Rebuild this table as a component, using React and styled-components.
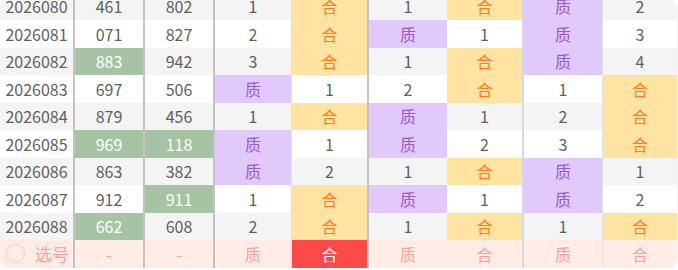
import React from "react";
import styled, { createGlobalStyle, css } from "styled-components";

const GlobalStyle = createGlobalStyle`
  html, body {
    margin: 0;
    padding: 0;
    background: #ffffff;
  }
  body {
    font-family: "Noto Sans CJK SC", "Noto Sans", sans-serif;
  }
`;

const Card = styled.div`
  width: 677px;
  height: 268px;
  border-radius: 10px;
  overflow: hidden;
  background: #ffffff;
  box-shadow: 0 0 3px rgba(0, 0, 0, 0.14);
`;

// the list is scrolled a little, the first row is cut at the top
const List = styled.div`
  margin-top: -7.5px;
`;

const Row = styled.div`
  display: grid;
  grid-template-columns: 75px 70px 70px 77px 77px 78px 77px 79px 1fr;
  height: 27.5px;
  background: ${p => (p.$tail ? "#ffece6" : p.$odd ? "#ffffff" : "#f4f4f4")};
`;

const tones = {
  plain: css`
    color: #5f5f5f;
  `,
  green: css`
    background: #a6c4a4;
    color: #ffffff;
  `,
  he: css`
    background: #ffe3a3;
    color: #ff7a1a;
  `,
  zhi: css`
    background: #e1c9fb;
    color: #9a57cf;
  `,
  pick: css`
    color: #ff9c9c;
  `,
  hit: css`
    background: #fc4a4a;
    color: #ffffff;
  `
};

const seps = {
  heavy: "2px solid #c3c3c3",
  light: "2px solid #d9d9d9",
  thin: "1px solid #e2e2e2"
};

const Cell = styled.div`
  box-sizing: border-box;
  display: flex;
  align-items: center;
  justify-content: center;
  font-size: 16px;
  line-height: 1;
  border-right: ${p => (p.$sep ? seps[p.$sep] : "none")};
  ${p => tones[p.$tone || "plain"]}
`;

const PickCell = styled(Cell)`
  justify-content: flex-start;
  padding-left: 6px;
  gap: 10px;
  font-size: 17px;
  color: #ff9c9c;
`;

const Ring = styled.span`
  box-sizing: border-box;
  width: 19px;
  height: 19px;
  border-radius: 50%;
  border: 1.5px solid #ffc6bd;
`;

const colSeps = [null, null, null, "thin", "heavy", null, "light", "thin", null];

const rows = [
  ["2026080", "461", "802", ["1", "合", "1", "合", "质", "2"]],
  ["2026081", "071", "827", ["2", "合", "质", "1", "质", "3"]],
  ["2026082", "883*", "942", ["3", "合", "1", "合", "质", "4"]],
  ["2026083", "697", "506", ["质", "1", "2", "合", "1", "合"]],
  ["2026084", "879", "456", ["1", "合", "质", "1", "2", "合"]],
  ["2026085", "969*", "118*", ["质", "1", "质", "2", "3", "合"]],
  ["2026086", "863", "382", ["质", "2", "1", "合", "质", "1"]],
  ["2026087", "912", "911*", ["1", "合", "质", "1", "质", "2"]],
  ["2026088", "662*", "608", ["2", "合", "1", "合", "1", "合"]]
];

const pickRow = ["质", "合", "质", "合", "质", "合"];

function toneOf(v) {
  if (v === "合") return "he";
  if (v === "质") return "zhi";
  return "plain";
}

function NumCell({ value }) {
  const hot = value.endsWith("*");
  return (
    <Cell $sep="heavy" $tone={hot ? "green" : "plain"}>
      {hot ? value.slice(0, -1) : value}
    </Cell>
  );
}

export default function App() {
  return (
    <>
      <GlobalStyle />
      <Card>
        <List>
          {rows.map(([period, a, b, marks], i) => (
            <Row key={period} $odd={i % 2 === 1}>
              <Cell $sep="heavy">{period}</Cell>
              <NumCell value={a} />
              <NumCell value={b} />
              {marks.map((m, j) => (
                <Cell key={j} $sep={colSeps[j + 3]} $tone={toneOf(m)}>
                  {m}
                </Cell>
              ))}
            </Row>
          ))}
          <Row $tail>
            <PickCell $sep="heavy">
              <Ring />
              选号
            </PickCell>
            <Cell $sep="heavy" $tone="pick">-</Cell>
            <Cell $sep="heavy" $tone="pick">-</Cell>
            {pickRow.map((m, j) => (
              <Cell key={j} $sep={colSeps[j + 3]} $tone={j === 1 ? "hit" : "pick"}>
                {m}
              </Cell>
            ))}
          </Row>
        </List>
      </Card>
    </>
  );
}
